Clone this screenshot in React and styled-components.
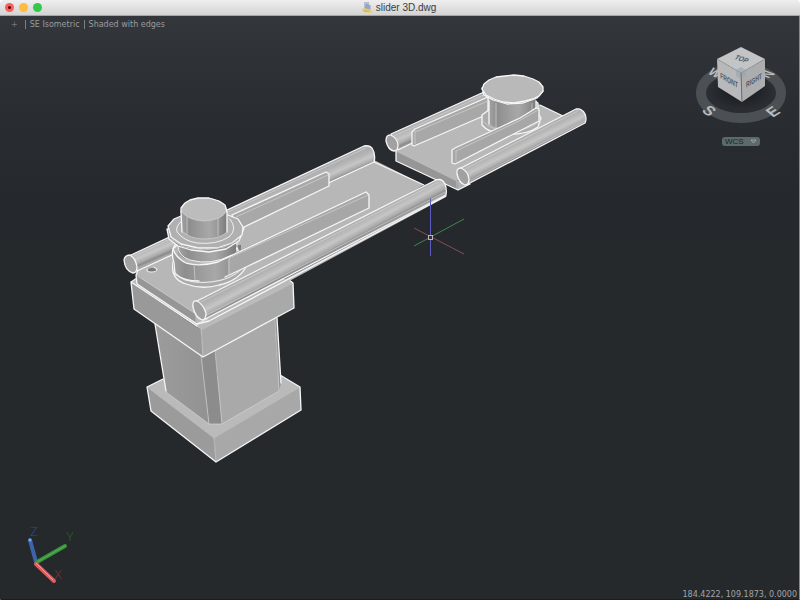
import styled, { createGlobalStyle } from 'styled-components';


const GlobalStyle = createGlobalStyle`
  * {
    box-sizing: border-box;
  }

  body {
    margin: 0;
    background: #fff;
    font-family: 'Liberation Sans', Arial, sans-serif;
  }
`;

const Window = styled.div`
  display: flex;
  flex-direction: column;
  min-height: 100vh;
  border-radius: 4px 4px 1px 1px;
  overflow: hidden;
`;

const TitleBar = styled.header`
  display: grid;
  grid-template-columns: 1fr auto 1fr;
  align-items: center;
  height: 16px;
  padding: 0 7px 0 5px;
  background: linear-gradient(#efefef, #d3d3d3);
  border-bottom: 1px solid #a4a5a6;
`;

const Lights = styled.div`
  display: flex;
  gap: 5px;
`;

const Light = styled.button`
  display: grid;
  place-items: center;
  width: 9px;
  height: 9px;
  padding: 0;
  border: 0;
  border-radius: 50%;
  background: ${(props) => props.$color};

  &::after {
    content: '';
    display: ${(props) => (props.$edited ? 'block' : 'none')};
    width: 3px;
    height: 3px;
    border-radius: 50%;
    background: #4a0505;
  }
`;

const Title = styled.h1`
  display: flex;
  align-items: center;
  gap: 4px;
  margin: 0;
  font-size: 10px;
  line-height: 14px;
  font-weight: 400;
  color: #3c3c3c;
`;

const Viewport = styled.main`
  position: relative;
  flex: 1;
  display: flex;
  border-right: 1px solid #85888c;
  border-bottom: 1px solid #1c1d22;
  background: linear-gradient(#33373c, #2a2e33 15%, #25292d 32%, #25292c);
`;

const Scene = styled.svg`
  display: block;
  flex: 1;
  width: 100%;
  min-width: 0;
`;

const ViewportControls = styled.nav`
  position: absolute;
  top: 4px;
  left: 7px;
  display: flex;
  align-items: center;
`;

const Control = styled.button`
  height: 9px;
  padding: 0 4px;
  border: 0;
  border-left: ${(props) => (props.$first ? '0' : '1px solid #7d8083')};
  background: none;
  font-family: 'DejaVu Sans', Verdana, sans-serif;
  font-size: 8px;
  line-height: 9px;
  color: #999c9e;

  &:first-child {
    padding-right: 7px;
    color: #74777a;
  }
`;

const Navigation = styled.aside`
  position: absolute;
  top: 30px;
  right: 12px;
  display: flex;
  flex-direction: column;
  align-items: center;
  gap: 13px;
`;

const WcsButton = styled.button`
  display: flex;
  align-items: center;
  justify-content: space-between;
  width: 38px;
  height: 9px;
  padding: 0 3px;
  border: 0;
  border-radius: 3px;
  background: #5b6a6c;
  font-family: 'Liberation Sans', Arial, sans-serif;
  font-size: 8px;
  line-height: 9px;
  color: #1d2426;
`;

const UcsIcon = styled.svg`
  position: absolute;
  left: 24px;
  bottom: 13px;
`;

const Coordinates = styled.output`
  position: absolute;
  right: 2px;
  bottom: 0;
  font-family: 'DejaVu Sans', Verdana, sans-serif;
  font-size: 8px;
  line-height: 8px;
  color: #a2a4a6;
`;

const Edge = styled.path`
  fill: ${(props) => props.$fill || 'none'};
  stroke: #f6f6f6;
  stroke-width: ${(props) => (props.$thin ? 0.9 : 1.3)};
  stroke-linejoin: round;
  stroke-linecap: round;
`;

const Face = styled.path`
  fill: ${(props) => props.$fill};
  stroke: none;
`;

const Crease = styled.path`
  fill: none;
  stroke: #d2d2d2;
  stroke-width: 0.7;
`;

const CubeLabel = styled.text`
  font-family: 'Liberation Sans', Arial, sans-serif;
  font-size: 8px;
  font-weight: 700;
  text-anchor: middle;
  fill: #55585c;
`;

const CompassLabel = styled.text`
  font-family: 'Liberation Sans', Arial, sans-serif;
  font-size: ${(props) => props.$size}px;
  font-weight: 700;
  text-anchor: middle;
  fill: #b9bbbd;
`;

const AxisLabel = styled.text`
  font-family: 'Open Sans', sans-serif;
  font-size: 13px;
  font-weight: 300;
  text-anchor: middle;
`;


const rodStops = (
  <>
    <stop offset="0" stopColor="#adadad" />
    <stop offset="0.2" stopColor="#b3b3b3" />
    <stop offset="0.5" stopColor="#c6c6c6" />
    <stop offset="0.74" stopColor="#ababab" />
    <stop offset="0.88" stopColor="#8a8a8a" />
    <stop offset="1" stopColor="#a8a8a8" />
  </>
);

const drumStops = (
  <>
    <stop offset="0" stopColor="#a2a2a2" />
    <stop offset="0.18" stopColor="#8e8e8e" />
    <stop offset="0.4" stopColor="#9c9c9c" />
    <stop offset="0.62" stopColor="#a8a8a8" />
    <stop offset="0.82" stopColor="#959595" />
    <stop offset="1" stopColor="#7a7a7a" />
  </>
);

const Defs = () => (
  <defs>
    <linearGradient id="rodBack" gradientUnits="userSpaceOnUse" x1="250" y1="200" x2="257" y2="216">{rodStops}</linearGradient>
    <linearGradient id="rodFront" gradientUnits="userSpaceOnUse" x1="317" y1="240" x2="326" y2="257">{rodStops}</linearGradient>
    <linearGradient id="rodFarBack" gradientUnits="userSpaceOnUse" x1="437" y1="113" x2="444" y2="129">{rodStops}</linearGradient>
    <linearGradient id="rodFarFront" gradientUnits="userSpaceOnUse" x1="518" y1="139" x2="526" y2="155">{rodStops}</linearGradient>
    <linearGradient id="drum">{drumStops}</linearGradient>
    <linearGradient id="column" x2="1" y2="0">
      <stop offset="0" stopColor="#9c9c9c" />
      <stop offset="1" stopColor="#929292" />
    </linearGradient>
  </defs>
);

const Pedestal = () => (
  <g>
    <Face $fill="#bababa" d="M147 387 L163 379 L280 375 L300 387 L214 438Z" />
    <Face $fill="#9b9b9b" d="M147 387 L214 438 L216 462 L151 411Z" />
    <Face $fill="#a8a8a8" d="M214 438 L300 387 L301 410 L216 462Z" />
    <Crease d="M147 387 L214 438 L300 387 M214 438 L216 462" />
    <Edge d="M163 379 L147 387 L151 411 L216 462 L301 410 L300 387 L280 375" />

    <Face $fill="url(#column)" d="M155 322 L202 350 L209 424 L166 392Z" />
    <Face $fill="#8c8c8c" d="M201 350 L215 348 L222 424 L209 424Z" />
    <Face $fill="#a9a9a9" d="M215 350 L275 317 L279 391 L222 424Z" />
    <Face $fill="#949494" d="M275 317 L277 317 L281 383 L279 391Z" />
    <Crease d="M201 355 L209 424 M215 350 L222 424 L279 391 M166 392 L209 424 H222 M275 319 L279 391" />
    <Edge d="M155 324 L166 391 M277 318 L281 383" />

    <Face $fill="#bababa" d="M131 282 L138 278 L288 279 L293 283 L201 330Z" />
    <Face $fill="#999" d="M131 282 L201 330 L203 357 L134 309Z" />
    <Face $fill="#a9a9a9" d="M201 330 L293 283 L294 308 L203 357Z" />
    <Crease d="M201 330 L293 283 M201 327 L203 357" />
    <Edge d="M137 278 L131 282 L134 309 L203 357 L294 308 L293 283 L288 279 M131 282 L197 326" />
  </g>
);

const SliderNear = () => (
  <g>
    <Face $fill="#b7b7b7" d="M136 275 L138 268 L180 246 L374 160 L424 185 L196 314Z" />
    <Face $fill="#969696" d="M136 275 L196 314 L197 324 L137 284Z" />
    <Crease d="M136 275 L196 314 V324" />
    <Edge d="M138 270 L136 275 L137 284 L197 324 L208 319 M374 162 L424 185" />

    <Edge $fill="url(#rodBack)" d="M131 255 L364 146 Q369 145 372 148 Q376 154 374 162 L137 271Z" />
    <Crease d="M134 256 L366 148" />
    <Edge $fill="#a1a1a1" d="M124 260 Q125 255 130 255 Q136 259 137 267 Q137 273 133 273 Q125 271 124 260Z" />

    <ellipse cx="152" cy="270" rx="4" ry="2" fill="#777" />
    <Edge $thin d="M147 269 Q146 272 151 272 Q157 272 157 269 L154 267" />

    <Edge $fill="#a8a8a8" d="M232 215 L326 172 L329 174 V186 L238 230Z" />
    <Crease d="M236 217 L328 175" />

    <Edge $fill="#aaa" d="M173 262 Q170 279 186 284 Q202 290 219 285 Q238 281 246 267Z" />
    <Edge $thin $fill="#b4b4b4" d="M174 260 Q171 275 185 280 Q202 285 222 280 Q238 275 243 267Z" />
    <Face $fill="url(#drum)" d="M173 246 V265 Q173 277 194 281 Q217 283 231 275 L241 269 V245Z" />
    <Edge d="M176 244 Q170 250 174 263 L175 274 Q184 281 199 281" />
    <Edge $fill="#b6b6b6" d="M173 249 Q176 258 186 263 Q200 267 218 262 L239 252 L237 248 Q210 254 178 244Z" />
    <Face $fill="url(#drum)" d="M178 242 V255 Q187 261 203 262 Q222 261 236 253 V240Z" />
    <Edge $thin d="M178 246 Q178 256 190 260 Q211 266 232 255 M237 242 V252" />

    <Face $fill="#a7a7a7" d="M236 252 L366 192 L369 195 V208 L241 270 L228 277 V260Z" />
    <Edge d="M226 258 L239 252 L366 192 L369 195 V208 L242 269 L225 277" />
    <Crease d="M229 258 L368 195 M229 258 V276 M194 264 L195 280" />

    <Edge $fill="#979797" d="M167 229 L169 239 L178 246 L191 250 L209 252 L226 249 L239 241 L244 228Z" />
    <Edge $fill="#b0b0b0" d="M168 226 L174 219 L188 213 L206 211 L223 213 L238 219 L243 227 L242 235 L232 243 L217 248 L198 248 L181 244 L171 237Z" />
    <Crease d="M171 239 L184 247 L204 250 L224 247 L238 240" />
    <Edge $thin d="M183 220 Q175 226 177 232 Q184 241 197 243 Q216 245 229 237 Q238 229 230 219" />
    <Face $fill="url(#drum)" d="M181 209 L182 231 Q190 239 204 239 Q220 239 227 232 V209Z" />
    <Edge d="M181 212 L182 232 M227 212 V232" />
    <Crease d="M182 231 Q190 239 204 239 Q220 239 227 232 M187 217 V235 M218 218 V236" />
    <Face $fill="#bcbcbc" d="M181 210 Q182 200 198 198 H209 Q226 201 227 210 Q223 220 204 221 Q186 220 181 210Z" />
    <Crease d="M181 210 Q186 220 204 221 Q223 220 227 210" />
    <Edge d="M181 212 V208 L185 203 L190 200 L198 198 H209 L219 201 L225 205 L227 212" />

    <Face $fill="#b9b9b9" d="M197 324 L208 319 L446 195 L446 197 L211 323 L201 330Z" />
    <Edge $fill="url(#rodFront)" d="M197 301 L436 180 Q442 178 445 184 Q447 189 446 195 L205 319Z" />
    <Crease d="M201 302 L438 182 M205 316 L445 192" />
    <Edge $fill="#a1a1a1" d="M193 307 Q192 300 197 301 Q203 304 206 313 Q206 320 202 320 Q195 317 193 307Z" />
    <Edge d="M197 324 L209 321 L446 196" />
  </g>
);

const SliderFar = () => (
  <g>
    <Face $fill="#b8b8b8" d="M396 151 L494 94 L540 105 L563 116 L457 181Z" />
    <Face $fill="#969696" d="M396 151 L457 181 L458 190 L396 161Z" />
    <Face $fill="#b1b1b1" d="M457 181 L466 177 L470 184 L458 190Z" />
    <Crease d="M396 151 L457 181 V190" />
    <Edge d="M396 151 V161 L458 190 L470 184 M540 105 L563 116" />

    <Edge $fill="url(#rodFarBack)" d="M391 134 L484 92 L500 100 L398 150Z" />
    <Crease d="M394 136 L486 94" />
    <Edge $fill="#a1a1a1" d="M386 141 Q386 135 390 135 Q397 137 398 145 Q398 151 394 151 Q388 150 386 141Z" />

    <Edge $fill="#a8a8a8" d="M412 132 L415 129 L488 97 V114 L414 146 L412 145Z" />
    <Crease d="M415 131 V144 M415 132 L488 101" />

    <Edge $fill="#acacac" d="M482 115 L482 125 Q488 132 501 134 Q525 136 538 127 L541 118 L536 110 L490 109Z" />
    <Crease d="M482 120 Q490 130 507 131 Q530 131 541 120" />
    <Edge $fill="#a3a3a3" d="M532 99 L538 103 V118 L530 120Z" />
    <Face $fill="url(#drum)" d="M489 98 V123 Q497 130 511 130 Q529 128 536 118 V98Z" />
    <Edge d="M489 101 V124 M536 101 V110" />
    <Crease d="M496 103 V128 M532 103 V114" />

    <Edge $fill="#a7a7a7" d="M452 150 L455 148 L520 118 L536 108 L539 109 V121 L455 164 L452 163Z" />
    <Crease d="M456 150 V162 M456 151 L519 121 L538 110" />

    <Edge $fill="#939393" d="M482 88 L484 95 L493 100 L507 104 L523 103 L537 98 L543 91Z" />
    <Edge $fill="#b9b9b9" d="M482 89 L484 84 L489 80 L496 77 L505 76 L514 75 L524 76 L533 79 L539 82 L543 87 V91 L539 96 L533 99 L525 101 L514 103 L503 102 L494 99 L486 95Z" />

    <Edge $fill="url(#rodFarFront)" d="M461 168 L576 109 Q582 108 585 114 Q587 119 585 123 L468 184Z" />
    <Crease d="M465 169 L578 111 M469 181 L585 121" />
    <Edge $fill="#a1a1a1" d="M457 174 Q456 168 461 168 Q468 171 469 179 Q469 185 465 185 Q459 183 457 174Z" />
  </g>
);

const Crosshair = () => (
  <g fill="none" strokeWidth="1">
    <path d="M414 228 L464 254" stroke="#8b4b50" />
    <path d="M414 246 L464 219" stroke="#438450" />
    <path d="M430.5 199 V256" stroke="#5b5bc0" />
    <rect x="428.5" y="235.5" width="4" height="4" fill="#303338" stroke="#b8b8b8" />
  </g>
);

const ViewCube = () => (
  <svg width="92" height="78" viewBox="695 46 92 78" role="img" aria-label="View cube">
    <defs>
      <radialGradient id="cubeShadow">
        <stop offset="0.4" stopColor="#17191c" stopOpacity="0.7" />
        <stop offset="1" stopColor="#17191c" stopOpacity="0" />
      </radialGradient>
    </defs>
    <ellipse cx="741" cy="93" rx="40" ry="25" fill="none" stroke="#4b5054" strokeWidth="10" />
    <ellipse cx="741" cy="90" rx="33" ry="20" fill="url(#cubeShadow)" />
    <CompassLabel $size={12} transform="translate(712 76) rotate(28) skewX(-18)">W</CompassLabel>
    <CompassLabel $size={13} transform="translate(772 76) rotate(-32) skewX(38)">N</CompassLabel>
    <CompassLabel $size={15} transform="translate(705 114) rotate(35) skewX(-15)">S</CompassLabel>
    <CompassLabel $size={15} transform="translate(777 115) rotate(-32) skewX(18)">E</CompassLabel>
    <path d="M741 47 L765 59 L741 73 L717 59Z" fill="#c2c4c5" />
    <path d="M717 59 L741 73 L742 102 L718 87Z" fill="#b7b9ba" />
    <path d="M741 73 L765 59 L765 86 L742 102Z" fill="#abadae" />
    <path d="M736 70 L741 67 L746 70 V76 L741 79 L736 76Z" fill="#9ba5af" opacity="0.6" />
    <path d="M717 59 L741 73 L765 59" fill="none" stroke="#8c9196" strokeWidth="0.7" strokeDasharray="3 1" />
    <path d="M741 73 L742 102" stroke="#63676b" strokeWidth="0.8" />
    <CubeLabel transform="matrix(0.76 0.28 -0.6 0.75 740 61)">TOP</CubeLabel>
    <CubeLabel transform="matrix(0.64 0.36 0 1 729 83)">FRONT</CubeLabel>
    <CubeLabel transform="matrix(0.64 -0.38 0 1 754 83)">RIGHT</CubeLabel>
  </svg>
);

const FileIcon = () => (
  <svg width="10" height="11" viewBox="0 0 10 11" aria-hidden="true">
    <path d="M2 0 H7 L9 3 V10 H2Z" fill="#b9bfd0" />
    <path d="M3 3 Q6 0 8 4 V7 H3Z" fill="#9aa4c0" />
    <path d="M7 0 L9 3 H7Z" fill="#e8e8ee" />
    <path d="M0 7 L2 6 L9 8 L10 11 L1 10Z" fill="#e7cd70" />
    <path d="M2 9 H7" stroke="#bda34c" strokeWidth="0.8" />
  </svg>
);

const Ucs = () => (
  <UcsIcon width="54" height="64" viewBox="24 522 54 64" role="img" aria-label="UCS axes">
    <g strokeWidth="4" strokeLinecap="round">
      <path d="M36 562 L30 540" stroke="#3d64ab" />
      <path d="M37 562 L65 546" stroke="#37943b" />
      <path d="M36 564 L54 581" stroke="#dd5e5f" />
    </g>
    <path d="M37 562 L65 546" stroke="#59b159" />
    <path d="M36 563 L53 580" stroke="#ff9494" />
    <circle cx="30" cy="540" r="1.6" fill="#72aaf1" />
    <AxisLabel x="34" y="536" fill="#234f9c">Z</AxisLabel>
    <AxisLabel x="70" y="541" fill="#286a2a">Y</AxisLabel>
    <AxisLabel x="58" y="579" fill="#963236">X</AxisLabel>
  </UcsIcon>
);


export default function App() {
  return (
    <>
      <GlobalStyle />
      <Window>
        <TitleBar>
          <Lights>
            <Light $color="#fb5f5a" $edited aria-label="Close" />
            <Light $color="#fdbc40" aria-label="Minimize" />
            <Light $color="#34c84a" aria-label="Zoom" />
          </Lights>
          <Title>
            <FileIcon />
            slider 3D.dwg
          </Title>
        </TitleBar>

        <Viewport>
          <Scene viewBox="0 16 799 583" role="img" aria-label="Slider model">
            <Defs />
            <Pedestal />
            <SliderFar />
            <SliderNear />
            <Crosshair />
          </Scene>

          <ViewportControls>
            <Control $first>+</Control>
            <Control>SE Isometric</Control>
            <Control>Shaded with edges</Control>
          </ViewportControls>

          <Navigation>
            <ViewCube />
            <WcsButton>
              WCS
              <svg width="7" height="5" viewBox="0 0 7 5" aria-hidden="true">
                <path d="M1 1 H6 L3.5 4Z" fill="none" stroke="#a8b3b4" strokeWidth="0.8" />
              </svg>
            </WcsButton>
          </Navigation>

          <Ucs />
          <Coordinates>184.4222, 109.1873, 0.0000</Coordinates>
        </Viewport>
      </Window>
    </>
  );
}
